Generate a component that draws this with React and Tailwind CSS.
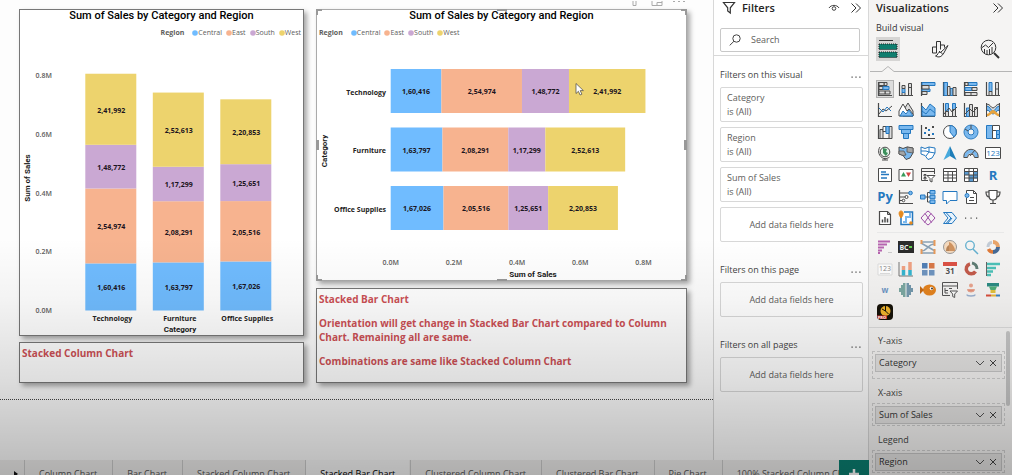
import React from "react";

const REGIONS = [
  { name: "Central", color: "#70bcff" },
  { name: "East", color: "#f7b38f" },
  { name: "South", color: "#caa8d3" },
  { name: "West", color: "#edd36d" },
];

const DATA = [
  { name: "Technology", values: [160416, 254974, 148772, 241992] },
  { name: "Furniture", values: [163797, 208291, 117299, 252613] },
  { name: "Office Supplies", values: [167026, 205516, 125651, 220853] },
];

const TICKS = [0, 0.2, 0.4, 0.6, 0.8];

const indian = (n) => n.toLocaleString("en-IN");

function segments(values) {
  let start = 0;
  return values.map((value, i) => {
    const seg = { value, start, color: REGIONS[i].color };
    start += value;
    return seg;
  });
}

const VALUE = "fill-[#1a1420] font-['Open_Sans',sans-serif] text-[7px] font-bold";
const CATEGORY = "fill-[#252423] font-['Open_Sans',sans-serif] text-[7px] font-bold";
const TICK = "fill-[#605e5c] font-['Open_Sans',sans-serif] text-[7px] font-semibold";
const AXIS = "fill-[#1a1a1a] font-[Roboto,sans-serif] text-[8px] font-bold";

function Legend({ align }) {
  return (
    <ul className={`mt-1.5 flex h-2.5 items-center gap-1 px-0.5 text-[7px] leading-[10px] text-[#605e5c] ${align}`}>
      <li className="mr-1 font-bold">Region</li>
      {REGIONS.map((r) => (
        <li key={r.name} className="flex items-center">
          <svg className="size-1.5" viewBox="0 0 6 6" aria-hidden="true"><circle cx="3" cy="3" r="2.800" fill={r.color} /></svg>
          {r.name}
        </li>
      ))}
    </ul>
  );
}

function ChartTitle() {
  return (
    <h2 className="text-center font-[Roboto,sans-serif] text-[11px] leading-3 font-medium text-black">
      Sum of Sales by Category and Region
    </h2>
  );
}

function ColumnChart() {
  const base = 272.5;
  const scale = 293.7 / 1e6;
  return (
    <svg viewBox="0 0 283 297" className="block h-auto w-full" role="img" aria-label="Stacked column chart">
      {TICKS.map((t) => (
        <text key={t} x="32" y={base - t * 293.7 + 2.5} textAnchor="end" className={TICK}>{t.toFixed(1)}M</text>
      ))}
      {DATA.map((d, i) => {
        const x = 65.3 + i * 67.5;
        return (
          <g key={d.name}>
            {segments(d.values).map((s) => (
              <g key={s.value}>
                <rect x={x} y={base - (s.start + s.value) * scale} width="51" height={s.value * scale} fill={s.color} />
                <text x={x + 26} y={base - (s.start + s.value / 2) * scale + 3.5} textAnchor="middle" className={VALUE}>{indian(s.value)}</text>
              </g>
            ))}
            <text x={x + 27} y="282.500" textAnchor="middle" className={CATEGORY}>{d.name}</text>
          </g>
        );
      })}
      <text x="160" y="294" textAnchor="middle" className={AXIS}>Category</text>
      <text transform="translate(10 140) rotate(-90)" textAnchor="middle" className={AXIS}>Sum of Sales</text>
    </svg>
  );
}

function BarChart() {
  const base = 73.7;
  const scale = 316 / 1e6;
  return (
    <svg viewBox="0 0 369 242" className="block h-auto w-full" role="img" aria-label="Stacked bar chart">
      {DATA.map((d, i) => {
        const y = 31 + i * 58.5;
        return (
          <g key={d.name}>
            <text x="69" y={y + 25.5} textAnchor="end" className={CATEGORY}>{d.name}</text>
            {segments(d.values).map((s) => (
              <g key={s.value}>
                <rect x={base + s.start * scale} y={y} width={s.value * scale} height="44" fill={s.color} />
                <text x={base + (s.start + s.value / 2) * scale} y={y + 25} textAnchor="middle" className={VALUE}>{indian(s.value)}</text>
              </g>
            ))}
          </g>
        );
      })}
      {TICKS.map((t) => (
        <text key={t} x={base + t * 316} y="227" textAnchor="middle" className={TICK}>{t.toFixed(1)}M</text>
      ))}
      <text x="216" y="238.500" textAnchor="middle" className={AXIS}>Sum of Sales</text>
      <text transform="translate(10 113) rotate(-90)" textAnchor="middle" className={AXIS}>Category</text>
      <path d="M259 45.500v10l2.400-2.200 1.700 3.700 1.800-.8-1.700-3.600h3.200z" fill="#fff" stroke="#444" strokeWidth=".7" />
    </svg>
  );
}

function SelectionHandles() {
  return (
    <div className="pointer-events-none absolute -inset-px" aria-hidden="true">
      <span className="absolute top-0 left-0 size-1.5 border-t-2 border-l-2 border-[#999]" />
      <span className="absolute top-0 right-0 size-1.5 border-t-2 border-r-2 border-[#999]" />
      <span className="absolute bottom-0 left-0 size-1.5 border-b-2 border-l-2 border-[#999]" />
      <span className="absolute right-0 bottom-0 size-1.5 border-r-2 border-b-2 border-[#999]" />
      <span className="absolute top-0 left-1/2 h-0.5 w-2.5 -translate-x-1/2 bg-[#999]" />
      <span className="absolute bottom-0 left-1/2 h-0.5 w-2.5 -translate-x-1/2 bg-[#999]" />
      <span className="absolute top-1/2 left-0 h-2.5 w-[3px] -translate-y-1/2 bg-[#999]" />
      <span className="absolute top-1/2 right-0 h-2.5 w-[3px] -translate-y-1/2 bg-[#999]" />
    </div>
  );
}

const SHADOW = "shadow-[3px_3px_5px_rgba(0,0,0,0.35)]";
const NOTE = "border border-[#777] bg-white px-0.5 pt-[3px] text-[10px] leading-[14px] font-bold text-[#cc5055]";

function Report() {
  return (
    <main className="min-w-0 flex-1 bg-[#fdfdfd] pt-[9px]">
      <div className="grid grid-cols-[285fr_371fr] gap-3 pr-[26px] pl-[19px]">
        <div className="flex flex-col gap-1.5">
          <section className={`border border-[#777] bg-white ${SHADOW}`}>
            <ChartTitle />
            <Legend align="justify-end" />
            <ColumnChart />
          </section>
          <section className={`flex-1 ${NOTE} ${SHADOW}`}>
            <p>Stacked Column Chart</p>
          </section>
        </div>
        <div className="flex flex-col gap-[7px]">
          <section className={`relative border border-[#aaa] bg-white ${SHADOW}`}>
            <ChartTitle />
            <Legend align="justify-start" />
            <BarChart />
            <SelectionHandles />
            <svg className="absolute -top-[9px] right-0 h-2 w-16" viewBox="0 0 64 8" fill="none" stroke="#aaa" aria-hidden="true">
              <path d="M11 0v4.500h3V0M30 0v4.500h10V0M35 4.500V1.500h5" />
              <path d="M51 .5h2M56 .5h2M61 .5h2" />
            </svg>
          </section>
          <section className={`flex flex-col gap-2.5 pb-3.5 ${NOTE} ${SHADOW}`}>
            <p>Stacked Bar Chart</p>
            <p>Orientation will get change in Stacked Bar Chart compared to Column Chart. Remaining all are same.</p>
            <p>Combinations are same like Stacked Column Chart</p>
          </section>
        </div>
      </div>
      <hr className="mt-4 border-t border-dotted border-[#444]" />
    </main>
  );
}

function Chevrons() {
  return (
    <svg className="size-3" viewBox="0 0 12 12" fill="none" stroke="#333" aria-hidden="true">
      <path d="M1.500 1.500 6 6l-4.500 4.500M6 1.500 10.500 6 6 10.500" />
    </svg>
  );
}

function FilterCard({ name }) {
  return (
    <button type="button" className="h-[35px] w-full rounded-xs border border-[#d8d8d8] bg-white px-1.5 text-left text-[9px] leading-[14px] text-[#605e5c]">
      <span className="block">{name}</span>
      <span className="block">is (All)</span>
    </button>
  );
}

function FilterGroup({ title, fields }) {
  return (
    <section className="flex flex-col gap-[5px]">
      <div className="flex h-3.5 items-center justify-between pr-0.5">
        <h3 className="text-[9px] text-[#444]">{title}</h3>
        <button type="button" aria-label={`More options, ${title}`}>
          <svg className="h-3 w-2.5" viewBox="0 0 10 12" fill="#444"><path d="M.5 7.500h1.200v1.200H.5zM4.400 7.500h1.200v1.200H4.400zM8.300 7.500h1.200v1.200H8.300z" /></svg>
        </button>
      </div>
      {fields.map((f) => <FilterCard key={f} name={f} />)}
      <div className="flex h-[35px] items-center justify-center rounded-xs border border-[#d8d8d8] text-[9px] text-[#605e5c]">
        Add data fields here
      </div>
    </section>
  );
}

function Filters() {
  return (
    <aside className="w-[156px] shrink-0 border-x border-[#d8d8d8] bg-white">
      <div className="border-b border-[#d8d8d8] px-1.5 pb-[3px]">
        <div className="flex h-4 items-center pl-0.5">
          <svg className="size-3.5" viewBox="0 0 14 14" fill="none" stroke="#333" strokeWidth="1.200" aria-hidden="true">
            <path d="M1.500 1.500h11L8.300 6.800V12L5.700 10V6.800z" />
          </svg>
          <h2 className="ml-1.5 text-[11px] font-semibold text-[#252423]">Filters</h2>
          <button type="button" aria-label="Show filter pane" className="ml-auto">
            <svg className="h-3 w-3" viewBox="0 0 12 12" fill="none" stroke="#444"><path d="M1 6c2-3.500 8-3.500 10 0" /><circle cx="6" cy="6.500" r="1.800" /></svg>
          </button>
          <button type="button" aria-label="Collapse filters" className="ml-2.5"><Chevrons /></button>
        </div>
        <label className="mt-3 mr-0.5 flex h-6 items-center gap-2.5 rounded-xs border border-[#c8c8c8] pl-2">
          <svg className="size-3 shrink-0" viewBox="0 0 12 12" fill="none" stroke="#444" aria-hidden="true"><circle cx="7.500" cy="4.500" r="3.700" /><path d="M4.900 7.300.7 11.400" /></svg>
          <input type="search" placeholder="Search" aria-label="Search filters" className="w-full min-w-0 bg-transparent text-[9px] text-[#605e5c] outline-none placeholder:text-[#605e5c]" />
        </label>
      </div>
      <div className="flex flex-col gap-[21px] pt-3 pr-[5px] pl-1.5">
        <FilterGroup title="Filters on this visual" fields={["Category", "Region", "Sum of Sales"]} />
        <FilterGroup title="Filters on this page" fields={[]} />
        <FilterGroup title="Filters on all pages" fields={[]} />
      </div>
    </aside>
  );
}

const K = "#4a4a4a";
const B = "#7ab8ee";
const D = "#2478c0";
const S = "#dcdcdc";

const AX = <path d="M1.500 1v13.500H15" stroke={K} strokeWidth="1.200" />;

const VISUALS = [
  ["Stacked bar chart", <>{AX}<path d="M7 1.500h3v3H7zM2 5.500h4v3H2zM8 10h5v3H8z" fill={S} stroke={K} /><path d="M2 1.500h5v3H2zM2 10h6v3H2z" fill={S} stroke={K} /><path d="M6 5.500h6v3H6z" fill={B} stroke={D} /></>],
  ["Stacked column chart", <>{AX}<path d="M4 11.500h3v3H4z" fill={S} stroke={K} /><path d="M4 7.500h3v4H4z" fill={B} stroke={D} /><path d="M4 4.500h3v3H4zM10.500 2.500h3v12h-3zM10.500 6.500h3" fill={S} stroke={K} /></>],
  ["Clustered bar chart", <><path d="M1.500 1v14" stroke={K} strokeWidth="1.200" /><path d="M2 1.500h13v3H2zM2 8h8v2.500H2z" fill={B} stroke={D} /><path d="M2 4.500h7V8H2zM2 10.500h5v3H2z" fill={S} stroke={K} /></>],
  ["Clustered column chart", <>{AX}<path d="M2 1.500h3.500v13H2zM8 7.500h3v7H8z" fill={B} stroke={D} /><path d="M5.500 5.500H8v9H5.500zM11 6.500h3v8h-3z" fill={S} stroke={K} /></>],
  ["100% stacked bar chart", <><path d="M1.500 1v14" stroke={K} strokeWidth="1.200" /><path d="M5 1.500h9v3H5zM2 6.500h7v3H2z" fill={B} stroke={D} /><path d="M2 1.500h3v3H2zM9 6.500h5v3H9zM2 11.500h12v3H2zM8 11.500v3" fill={S} stroke={K} /></>],
  ["100% stacked column chart", <>{AX}<path d="M4 1.500h3v9H4z" fill={B} stroke={D} /><path d="M4 10.500h3v4H4zM10.500 1.500h3v13h-3zM10.500 8h3" fill={S} stroke={K} /></>],
  ["Line chart", <>{AX}<path d="m2 12 4-5 3 2 6-5" stroke={K} /><path d="m2 6 4 4 4-5 4 4" stroke={D} /></>],
  ["Area chart", <><path d="m5 9 5-8 5 8v5H5z" fill={S} stroke={K} /><path d="M1 14V9l4-7 4 7 2-2 4 5v2z" fill="#fff" stroke={K} /><path d="m2 14 3-5 3 3 3-4 4 6z" fill={B} stroke={D} /></>],
  ["Stacked area chart", <>{AX}<path d="m2 4 4 4 4-6 5 4v8H2z" fill={B} stroke={D} /><path d="m2 9 4 3 4-5 5 4" stroke={D} /></>],
  ["Line and stacked column chart", <>{AX}<path d="M3.500 1.500h3v8h-3zM10.500 1.500h3v6h-3z" fill={B} stroke={D} /><path d="M3.500 9.500h3v5h-3zM10.500 7.500h3v7h-3z" fill={S} stroke={K} /><path d="m2 12 5-6 3 4 5-5" stroke={K} /></>],
  ["Line and clustered column chart", <>{AX}<path d="M3.500 6h3v8.500h-3z" fill={B} stroke={D} /><path d="M6.500 2.500h3v12h-3zM11.500 5.500h3v9h-3z" fill={S} stroke={K} /><path d="m2 12 5-5 3 3 5-5" stroke={K} /></>],
  ["Ribbon chart", <><path d="M1.500 2c4 0 4.500 4 6.500 4s3-4 6.500-4v6c-3 0-4 3-6.500 3S5 8 1.500 8z" fill={S} stroke={K} /><path d="M1.500 4c4 0 4 5 6.500 5s3-5 6.500-5v4c-3 0-4 4-6.500 4S5 8 1.500 8z" fill={B} stroke={D} /><path d="M1.500 12c3 0 3.500-4 6.500-4s4 4 6.500 4v2.500c-3 0-4-3-6.500-3s-3 3-6.500 3z" fill="#e8a33d" /><path d="M1.500 1v14M14.500 1v14" stroke={K} /></>],
  ["Waterfall chart", <>{AX}<path d="M3 5.500h3v9H3zM12 2.500h3v12h-3z" fill={S} stroke={K} /><path d="M6 2.500h3v5H6z" fill="#fff" stroke={K} /><path d="M9 2.500h3v7H9z" fill={B} stroke={D} /></>],
  ["Funnel chart", <path d="M1 1.500h14v4H1zM3.500 5.500h9v4h-9zM5.500 9.500h5v5h-5z" fill={B} stroke={D} />],
  ["Scatter chart", <>{AX}<path d="M4 8h2v2H4zM8 5h2v2H8zM12 9h2v2h-2z" fill={D} /><path d="M5 3h2v2H5zM8 10h2v2H8zM12 2h2v2h-2z" fill={K} /></>],
  ["Pie chart", <><circle cx="8" cy="8" r="6.500" fill="#fff" stroke={K} /><path d="M8 1.500A6.500 6.500 0 0 1 12 13L8 8z" fill={B} stroke={D} /></>],
  ["Donut chart", <><circle cx="8" cy="8" r="5" stroke={B} strokeWidth="3.500" /><circle cx="8" cy="8" r="7" stroke={D} /><circle cx="8" cy="8" r="3" stroke={D} /><path d="M8 1v4M2 5l3 2" stroke={K} /></>],
  ["Treemap", <><path d="M1.500 1.500h6v13h-6z" fill={B} stroke={D} /><path d="M7.500 1.500h7v5h-7zM7.500 6.500h4v8h-4z" fill="#fff" stroke={K} /><path d="M11.500 6.500h3v4h-3zM11.500 10.500h3v4h-3z" fill={B} stroke={D} /></>],
  ["Map", <><circle cx="8" cy="7" r="4.800" fill="#e6f2ea" stroke={K} /><path d="M6 3l4 1-1 3 2 1-2 3-3-3z" fill="#3b8f5b" /><path d="M3 2C0 6 2 12 7 13.500c2 .3 4-.2 5.500-1.500M8 13v2M5 15h6" stroke={K} /></>],
  ["Filled map", <><path d="M1 2l4 1.500L9 2l6 1v5l-3 5-4 1.500-3-4L1 9z" fill={B} stroke={K} /><path d="M9 2v5l6 1V3zM1 6h5l2 4-3 .5L1 9z" fill="#a5a5a5" stroke={K} strokeWidth=".7" /></>],
  ["Shape map", <><path d="M1 2l4 1.500L9 2l6 1v5l-3 5-4 1.500-3-4L1 9z" fill="#fff" stroke={D} /><path d="M1 6h5l3 1 6 1M9 2v5l-3 4" stroke={D} /></>],
  ["Azure map", <><path d="M8 1 1.500 15 8 11z" fill="#47a9dc" /><path d="M8 1l6.500 14L8 11z" fill="#1d7db8" /></>],
  ["Gauge", <><path d="M2.500 12a5.500 5.500 0 0 1 11 0" stroke={B} strokeWidth="3.500" /><path d="M.8 12.500v-1a7.200 7.200 0 0 1 14.400 0v1h-3.700a3.500 3.500 0 0 0-7 0z" stroke={K} /><path d="m7 11 5-6" stroke={K} /></>],
  ["Card", <><path d="M.5 2.500h15v11H.5z" fill="#fff" stroke={K} /><text x="8" y="11" textAnchor="middle" className="text-[8px]" fill={D}>123</text></>],
  ["Multi-row card", <><path d="M1.500 1.500h13v13h-13z" fill="#fff" stroke={K} /><path d="M4 5h5M4 7.500h8M4 11h6" stroke={D} strokeWidth="1.500" /></>],
  ["KPI", <><path d="M1 2.500h14v11H1z" fill="#fff" stroke={K} /><path d="m3 9.500 2.500-4.500L8 9.500z" fill="#3a9b5c" /><path d="m8 5.500 2.500 4.500L13 5.500z" fill="#d64545" /></>],
  ["Slicer", <><path d="M8 13.500H1.500v-12h13V7M1.500 4.500h13M4 7.500h2v1.500H4zM4 10.500h2v1.500H4z" stroke={K} /><path d="M7 8.500h8l-3 3v3.500l-2-1v-2.500z" fill="#fff" stroke={K} /></>],
  ["Table", <><path d="M1.500 1.500h13v13h-13zM1.500 4.500h13M1.500 8h13M1.500 11h13M6 4.500v10M10.500 4.500v10" fill="#fff" stroke={K} /></>],
  ["Matrix", <><path d="M1.500 1.500h13v13h-13z" fill="#fff" stroke={K} /><path d="M6 8h4.500v6.500H6zM10.500 4.500h4v7h-4zM1.500 4.500H6V8H1.500z" fill={D} opacity=".75" /><path d="M1.500 4.500h13M1.500 8h13M1.500 11h13M6 1.500v13M10.500 1.500v13" stroke={K} /></>],
  ["R script visual", <text x="8" y="13" textAnchor="middle" className="text-[13px] font-bold" fill={D}>R</text>],
  ["Python visual", <text x="8" y="12" textAnchor="middle" className="text-[13px] font-bold" fill={D}>Py</text>],
  ["Key influencers", <>{AX}<path d="M2 4h9M2 8h6M2 11.500h3" stroke={K} /><circle cx="12.500" cy="4" r="1.800" fill={B} stroke={D} /><circle cx="8.500" cy="8" r="1.500" fill="#fff" stroke={K} /><circle cx="5.500" cy="11.500" r="1.300" fill="#fff" stroke={K} /></>],
  ["Decomposition tree", <><path d="M5 8h5M7.500 8V3.500H10M7.500 8v5H10" stroke={K} /><path d="M.5 6h4.500v4H.5zM10 1.500h5v3.500h-5zM10 6.300h5v3.400h-5zM10 11h5v3.500h-5z" fill={B} stroke={D} /></>],
  ["Q&A", <path d="M1 2.500h14v9H8L4.500 15v-3.500H1z" fill="#fff" stroke={D} />],
  ["Smart narrative", <><path d="M3.500 4V1.500h7l3 3v10h-10V9" fill="#fff" stroke={K} /><path d="M10.500 1.500v3h3M6 11.500h5M7 8.500h4" stroke={K} /><circle cx="4" cy="6.500" r="2" fill={B} stroke={D} /></>],
  ["Goals", <><path d="M4 1.500h8V7c0 3-2 4-4 4s-4-1-4-4z" fill="#fff" stroke={K} strokeWidth="1.200" /><path d="M4 3H1c0 3 1 5 3.500 5M12 3h3c0 3-1 5-3.500 5M8 11v3M5 14.500h6" stroke={K} strokeWidth="1.200" /></>],
  ["Paginated report", <><path d="M2.500 1.500h8l3 3v10h-11z" fill="#fff" stroke={K} strokeWidth="1.200" /><path d="M10.500 1.500v3h3" stroke={K} /><path d="M5.500 12.500V9.500M8 12.500V7M10.500 12.500v-4" stroke={K} strokeWidth="1.500" /></>],
  ["ArcGIS map", <><path d="M3 6v8.500h11.500V2H6" fill="#fff" stroke={D} strokeWidth="1.500" /><path d="M5 12h3V7h4V3" stroke={B} strokeWidth="2" /><path d="M3 8C0 4 1 1 3 1s3.500 3 0 7z" fill="#e58a1f" stroke="#e58a1f" /><circle cx="13" cy="13" r="1.800" fill="#e58a1f" /></>],
  ["Power Apps", <path d="M5.500 3 8 1l2.500 2L15 8l-4.500 5L8 15l-2.500-2L1 8zM5 3.500l6.500 9M11 3.500l-6.500 9" stroke="#9b4aa5" />],
  ["Power Automate", <><path d="M1.500 2.500H10L14.500 8 10 13.500H1.500L6 8z" fill="#e8f3fc" stroke={D} /><path d="M4 2.500 9 8l-5 5.500M10 8l-4.500 5.500" stroke={D} /></>],
  ["More visuals", <path d="M2 7.500h1.200v1.200H2zM7.500 7.500h1.200v1.200H7.500zM13 7.500h1.200v1.200H13z" fill={K} />],
];

const CUSTOM = [
  ["Tornado", <><path d="M1 2.500h12M1 5.500h9M1 8.500h6M1 11.500h4M1 14h2" stroke="#b765b0" strokeWidth="2" /><path d="M11 13.500h4" stroke="#ccc" /></>],
  ["Text search", <><path d="M0 2h16v12H0z" fill="#2b2b2b" /><text x="6" y="10.500" textAnchor="middle" className="text-[7px] font-bold" fill="#eee">BC</text><path d="M11 8h3" stroke="#5fce4d" strokeWidth="2" /></>],
  ["Sankey", <><path d="M1 3h14M1 4l14 8M1 12c7 0 6-7 14-7M1 14h14" stroke="#8aa1b5" strokeWidth="1.500" /><path d="M1.500 1v4M1.500 10v5M14.500 1v6M14.500 10v5" stroke="#e89a5a" strokeWidth="2" /></>],
  ["Rose", <><circle cx="8" cy="8" r="6.500" fill="#f5d9bd" stroke="#999" /><path d="M7 3v9h6c0-4-3-8-6-9z" fill="#cf9360" /><path d="M7 6c-2 1-3 3-3 6h3z" fill="#b98558" /></>],
  ["Smart search", <><circle cx="7" cy="6.500" r="4.300" stroke="#63b0cf" strokeWidth="1.300" /><path d="m10 10 5 5" stroke="#63b0cf" strokeWidth="1.500" /></>],
  ["Sunburst", <><path d="M8 3A5 5 0 0 1 13 8" stroke="#e8a56b" strokeWidth="4" /><path d="M13 8A5 5 0 0 1 8 13" stroke="#466a96" strokeWidth="4" /><path d="M8 13A5 5 0 0 1 3.500 10" stroke="#e07b39" strokeWidth="3.500" /><path d="M3 8A5 5 0 0 1 7 3.200" stroke="#c2cbd6" strokeWidth="3" /></>],
  ["Advanced card", <><path d="M1 3h14v11H1z" fill="#fff" stroke="#ddd" /><text x="8" y="10" textAnchor="middle" className="text-[7px]" fill="#888">123</text><path d="M3 12.500h10" stroke="#ddd" /></>],
  ["Variance column", <><path d="M1 1v14h14" stroke="#777" /><path d="M5.500 14.500V9M12 14.500V9" stroke="#35b5d0" strokeWidth="3.500" /><path d="M5.500 9V5M12 9V1" stroke="#f0a284" strokeWidth="3.500" /></>],
  ["Tile grid", <><path d="M2 2h5.500v5.500H2z" fill="#527fb5" /><path d="M9 2h5.500v5.500H9z" fill="#d97948" /><path d="M2 9h5.500v5.500H2zM9 9h5.500v5.500H9z" fill="#6f94bf" /></>],
  ["Calendar", <><path d="M1 1h14v14H1z" fill="#f7f7f7" /><path d="M1 1h14v4H1z" fill="#dc5145" /><text x="8" y="13" textAnchor="middle" className="text-[8px] font-bold" fill="#555">31</text></>],
  ["Radial", <><path d="M7 3a5 5 0 1 0 5.500 7.500" stroke="#c35b4b" strokeWidth="3.500" /><path d="M9 2a6 6 0 0 1 5 6" stroke="#5f7d74" strokeWidth="3" /></>],
  ["Bullet bars", <><path d="M1.500 1v14" stroke="#666" /><path d="M2 3h13M2 7h9M2 10.500h6M2 14h4" stroke="#4cc1b8" strokeWidth="2.500" /></>],
  ["Word cloud", <text x="8" y="11" textAnchor="middle" className="text-[8px] font-bold" fill="#6d94c4">w</text>],
  ["Puzzle", <><path d="M1 6h2V3h2V1h2.500v14H5v-2H3v-3H1z" fill="#7ca8a2" /><path d="M15 6h-2V3h-2V1H8.500v14H11v-2h2v-3h2z" fill="#7599ad" /></>],
  ["Enlighten aquarium", <><ellipse cx="9.500" cy="8" rx="6.500" ry="5.500" fill="#e4831f" /><path d="m4 8-4-4v8z" fill="#c76b14" /><circle cx="11.500" cy="6.500" r="1.800" fill="#fff" /><circle cx="12" cy="6.500" r=".9" fill="#222" /></>],
  ["Hierarchy slicer", <><path d="M8 13.500H.5v-13h15V7M.5 4h15M3 6v5h3M3 8.500h3" stroke="#555" /><path d="M7 6.500h3M8 9h7.500l-2.800 3v3.500l-2-1V12z" fill="#fff" stroke="#555" /></>],
  ["Infographic", <><circle cx="8" cy="3.500" r="2" fill="#e9a48e" /><path d="M4.500 7.500a3.500 2.500 0 0 0 7 0z" fill="#e58f78" stroke="#e9a48e" /><path d="M4 12.500a4 1.500 0 0 0 8 0" stroke="#9bb0cf" strokeWidth="1.500" /></>],
  ["Gradient funnel", <><path d="M2 1h12v3.500H2z" fill="#2c8c84" /><path d="M4 4.500h8L10.500 8h-5z" fill="#4fae7a" /><path d="M5.500 8h5v3h-5z" fill="#e3c13c" /><path d="M1 13.500h5" stroke="#d94f3c" strokeWidth="2" /><path d="M6 13.500h5" stroke="#e8b73c" strokeWidth="2" /><path d="M11 13.500h4" stroke="#3a83c4" strokeWidth="2" /></>],
  ["Play axis pro", <><rect width="16" height="16" rx="4" fill="#161208" /><circle cx="8.500" cy="7" r="5" fill="#f0b52c" /><path d="M8.500 2v5l3 3M5 5l3.500 2" stroke="#161208" /><path d="M0 11.500h10V15H1z" fill="#d8352a" /><text x="5" y="14.500" textAnchor="middle" className="text-[4px] font-bold" fill="#fff">PRO</text></>],
];

function IconGrid({ items, rows, selected }) {
  return (
    <div className={`grid grid-cols-6 pr-2 pl-[5px] ${rows}`}>
      {items.map(([name, art]) => (
        <button
          key={name}
          type="button"
          title={name}
          aria-label={name}
          className={`m-auto flex size-[18px] items-center justify-center ${name === selected ? "bg-[#dcdcdc] outline outline-[#b0b0b0] -outline-offset-1" : ""}`}
        >
          <svg className="size-4 shrink-0" viewBox="0 0 16 16" fill="none">{art}</svg>
        </button>
      ))}
    </div>
  );
}

function Well({ label, field, body }) {
  return (
    <section>
      <h3 className="ml-1.5 text-[9px] leading-3 text-[#444]">{label}</h3>
      <div className={`mt-1 border border-dashed border-[#cfcfcf] px-0.5 pt-0.5 ${body}`}>
        <div className="flex h-[18px] items-center border border-[#c8c8c8] bg-[#e6e5e4] pr-1 pl-[3px] text-[9px] text-[#333]">
          <span className="mr-auto">{field}</span>
          <button type="button" aria-label={`${field} options`}>
            <svg className="h-3 w-2.5" viewBox="0 0 10 12" fill="none" stroke="#555"><path d="m1 4 4 4 4-4" /></svg>
          </button>
          <button type="button" aria-label={`Remove ${field}`} className="ml-1">
            <svg className="size-2" viewBox="0 0 8 8" fill="none" stroke="#444"><path d="m1 1 6 6M7 1 1 7" /></svg>
          </button>
        </div>
      </div>
    </section>
  );
}

function Visualizations() {
  return (
    <aside className="flex w-[143px] shrink-0 flex-col overflow-hidden bg-[#f5f4f3]">
      <div className="flex h-4 items-center justify-between pr-2 pl-[7px]">
        <h2 className="text-[11px] font-semibold text-[#252423]">Visualizations</h2>
        <button type="button" aria-label="Collapse visualizations"><Chevrons /></button>
      </div>
      <p className="mt-1.5 pl-[7px] text-[9px] leading-3 text-[#333]">Build visual</p>
      <div className="mt-[3px] flex items-center justify-between pr-3 pl-[7px]">
        <button type="button" aria-label="Build visual" className="flex size-6 items-center justify-center bg-[#d6d5d4]">
          <svg className="size-5" viewBox="0 0 20 20"><path d="M1 1.500h14" stroke="#333" /><path d="M1 5h18v5.500H1zM1 13h18v5.500H1z" fill="#0f7d6e" stroke="#222" strokeDasharray="1 1" /></svg>
        </button>
        <button type="button" aria-label="Format visual">
          <svg className="size-[18px]" viewBox="0 0 18 18" fill="none" stroke="#333"><path d="M1.500 13V7h4v6M5.500 10V1.500h4v8M9.500 5h4v3M1.500 13h4" /><path d="m17 5.500-7.500 7L8 11M17 5.500l-5 9M9.500 12c-3-.5-2 3.500-5 4 3 2 7 .5 7-2z" fill="#fff" /></svg>
        </button>
        <button type="button" aria-label="Analytics">
          <svg className="size-5" viewBox="0 0 20 20" fill="none" stroke="#333"><circle cx="8.500" cy="8.500" r="7.300" /><path d="m1.500 9 4-3 3 2.500L13 4M4.500 14V10M7 15.500V11M9.500 15.500V10M12 14.500V8" /><path d="m14 14 5 5" strokeWidth="2" /></svg>
        </button>
      </div>
      <svg className="mt-1 h-2 w-full shrink-0" viewBox="0 0 143 8" preserveAspectRatio="xMinYMin slice" fill="none" stroke="#b5b5b5" aria-hidden="true"><path d="M1 6.500h12l6-5 6 5h400" /></svg>
      <div className="mt-[5px]">
        <IconGrid items={VISUALS} rows="h-[151px] grid-rows-7" selected="Stacked bar chart" />
      </div>
      <hr className="mx-2 mt-[3px] border-[#e8e8e8]" />
      <div className="mt-[3px]">
        <IconGrid items={CUSTOM} rows="h-[87px] grid-rows-4" />
      </div>
      <div className="mt-1 flex border-t border-[#dcdcdc] pt-[3px] pr-0.5 pl-[3px]">
        <div className="flex min-w-0 flex-1 flex-col gap-2 pt-1">
          <Well label="Y-axis" field="Category" body="pb-1.5" />
          <Well label="X-axis" field="Sum of Sales" body="pb-px" />
          <Well label="Legend" field="Region" body="pb-px" />
        </div>
        <div className="ml-px h-[75px] w-1 rounded-full bg-[#c6c6c6]" />
      </div>
    </aside>
  );
}

const TABS = ["Column Chart", "Bar Chart", "Stacked Column Chart", "Stacked Bar Chart", "Clustered Column Chart", "Clustered Bar Chart", "Pie Chart", "100% Stacked Column Chart"];

function PageTabs() {
  return (
    <nav className="flex h-[15px] shrink-0 items-start overflow-hidden bg-[#f0efee] text-[9px]" aria-label="Report pages">
      <button type="button" aria-label="Next page" className="flex h-7 w-6 shrink-0 items-center justify-end pr-1.5">
        <svg className="h-1.5 w-1" viewBox="0 0 4 6"><path d="M0 0v6l4-3z" fill="#111" /></svg>
      </button>
      <div className="flex min-w-0 flex-1 gap-px overflow-hidden">
        {TABS.map((t) => (
          <button
            key={t}
            type="button"
            className={`h-7 shrink-0 border-l border-[#ccc] px-3.5 whitespace-nowrap ${t === "Stacked Bar Chart" ? "bg-[#f9f9f9] font-medium text-black" : "text-[#555]"}`}
          >
            {t}
          </button>
        ))}
      </div>
      <button type="button" aria-label="New page" className="flex h-7 w-[30px] shrink-0 items-center justify-center bg-[#0b8072]">
        <svg className="size-2.5" viewBox="0 0 10 10"><path d="M5 0v10M0 5h10" stroke="#fff" strokeWidth="2.500" /></svg>
      </button>
    </nav>
  );
}

export default function App() {
  return (
    <div className="relative flex h-screen overflow-hidden bg-white font-['Open_Sans','Noto_Sans',sans-serif]">
      <div className="flex min-w-0 flex-1 flex-col">
        <div className="flex min-h-0 flex-1 overflow-hidden">
          <Report />
          <Filters />
        </div>
        <PageTabs />
      </div>
      <Visualizations />
      <div className="pointer-events-none absolute inset-0 bg-[linear-gradient(to_bottom,transparent_50%,rgba(0,0,0,0.04)_63%,rgba(0,0,0,0.13)_80%,rgba(0,0,0,0.27)_100%)]" />
    </div>
  );
}
